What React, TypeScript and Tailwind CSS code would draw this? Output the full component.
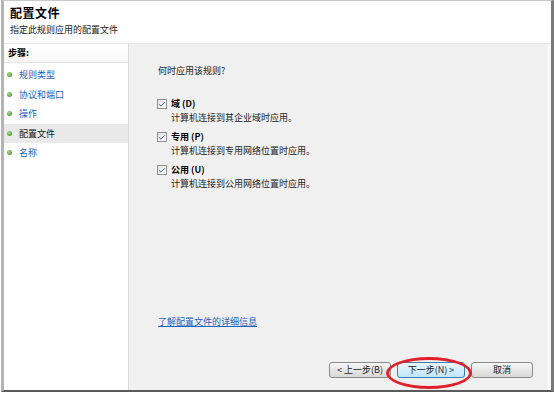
import { Check } from 'lucide-react';

const font = { fontFamily: '"Noto Sans CJK SC", "Liberation Sans", sans-serif' };

const steps = [
  { label: '规则类型', active: false },
  { label: '协议和端口', active: false },
  { label: '操作', active: false },
  { label: '配置文件', active: true },
  { label: '名称', active: false },
];

const profiles = [
  { name: '域', key: 'D', desc: '计算机连接到其企业域时应用。' },
  { name: '专用', key: 'P', desc: '计算机连接到专用网络位置时应用。' },
  { name: '公用', key: 'U', desc: '计算机连接到公用网络位置时应用。' },
];

function Bullet() {
  return (
    <span className="w-[5px] h-[5px] rounded-full bg-[radial-gradient(circle_at_35%_35%,#a6dd86,#2f8a1f)] shrink-0" />
  );
}

function CheckBox() {
  return (
    <span className="w-[10px] h-[10px] border border-[#8e8f8f] bg-gradient-to-br from-[#e2e2e2] to-[#ffffff] flex items-center justify-center shrink-0">
      <Check size={9} strokeWidth={3} className="text-[#4a5f97]" />
    </span>
  );
}

function WinButton({ children, focused }: { children: React.ReactNode; focused?: boolean }) {
  return (
    <div
      className={
        'h-[16px] rounded-[3px] border flex items-center justify-center text-[9px] text-[#1a1a1a] ' +
        (focused
          ? 'w-[68px] border-[#3c7fb1] bg-gradient-to-b from-[#eaf6fd] to-[#bee6fd]'
          : 'w-[62px] border-[#8a8a8a] bg-gradient-to-b from-[#f6f6f6] to-[#d8d8d8]')
      }
    >
      {children}
    </div>
  );
}

export default function App() {
  return (
    <div className="w-[554px] h-[394px] bg-white overflow-hidden" style={font}>
      <div className="h-[392px] flex flex-col border-t border-[#c8c8c8] border-l-[3px] border-l-[#b4b4b4] border-r-[3px] border-r-[#7a7a7a] border-b-2 border-b-[#5a5a5a] ml-[1px]">
        {/* header */}
        <div className="h-[43px] shrink-0 bg-white border-b border-[#e6e6e6] pl-[6px]">
          <div className="text-[12px] font-bold leading-[14px] pt-[5px] text-black tracking-[0.5px]">配置文件</div>
          <div className="text-[9px] leading-[12px] mt-[4px] text-[#222]">指定此规则应用的配置文件</div>
        </div>

        <div className="flex flex-1">
          {/* steps */}
          <div className="w-[125px] bg-white border-r border-[#dadada] shrink-0">
            <div className="h-[19px] flex items-center pl-[4px] text-[9px] font-bold text-black border-b border-[#e4e4e4] bg-gradient-to-b from-white to-[#f7f7f7]">
              步骤:
            </div>
            <div className="pt-[2px]">
              {steps.map((s) => (
                <div
                  key={s.label}
                  className={
                    'h-[19.5px] flex items-center gap-[7px] pl-[3px] text-[9px] ' +
                    (s.active ? 'bg-[#e9e9e9] text-[#111]' : 'text-[#1c62c0]')
                  }
                >
                  <Bullet />
                  <span>{s.label}</span>
                </div>
              ))}
            </div>
          </div>

          {/* content */}
          <div className="flex-1 bg-[#f0f0f0] border-r-[4px] border-[#f8f8f8] flex flex-col pl-[28px] relative">
            <div className="text-[9px] leading-[12px] mt-[21px] pl-[1px] text-[#222]">何时应用该规则?</div>
            <div className="mt-[21px] flex flex-col gap-[7px]">
              {profiles.map((p) => (
                <div key={p.key}>
                  <div className="flex items-center gap-[4px] h-[12px]">
                    <CheckBox />
                    <span className="text-[9px] font-bold text-black">
                      {p.name} ({p.key})
                    </span>
                  </div>
                  <div className="text-[9px] leading-[12px] mt-[2px] pl-[14px] text-[#222]">{p.desc}</div>
                </div>
              ))}
            </div>
            <div className="mt-auto mb-[62px] pl-[1px] text-[9px] leading-[12px] text-[#1c62c0] underline">
              了解配置文件的详细信息
            </div>
            <div className="absolute left-[200px] bottom-[12px] flex gap-[6px]">
              <WinButton>&lt; 上一步(B)</WinButton>
              <WinButton focused>下一步(N) &gt;</WinButton>
              <WinButton>取消</WinButton>
            </div>
            {/* annotation */}
            <div className="absolute left-[257px] top-[313px] w-[86px] h-[32px] rounded-[50%] border-[3px] border-[#e0202a]" />
          </div>
        </div>
      </div>
    </div>
  );
}
